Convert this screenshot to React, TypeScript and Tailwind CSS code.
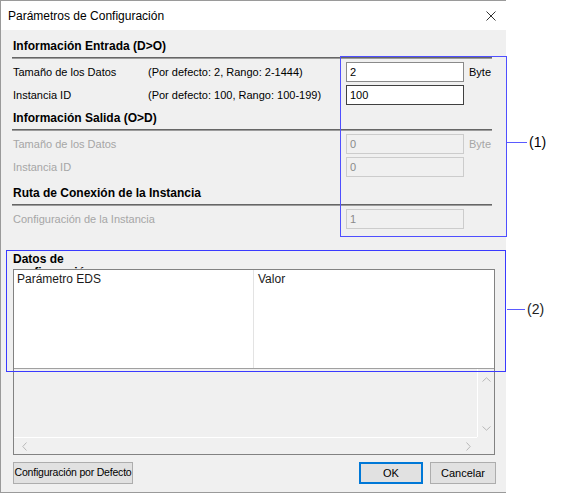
import React from "react";

function SectionHeader({ title, mt }: { title: string; mt: string }) {
  return (
    <>
      <div className={`${mt} h-[16px] whitespace-nowrap pl-[1px] text-[12px] font-bold leading-[16px] text-black`}>{title}</div>
      <div className="mt-[3px] w-[480px]">
        <div className="h-px bg-[#666666]" />
        <div className="h-px bg-[#9c9c9c]" />
      </div>
    </>
  );
}

function Row({
  label,
  hint,
  value,
  unit,
  disabled,
  dark,
}: {
  label: string;
  hint?: string;
  value: string;
  unit?: string;
  disabled?: boolean;
  dark?: boolean;
}) {
  return (
    <div className="mt-[3px] flex h-[20px] items-center whitespace-nowrap">
      <div className={`w-[136px] shrink-0 pl-[1px] ${disabled ? "text-[#a6a6a6]" : "text-black"}`}>{label}</div>
      <div className="w-[198px] shrink-0 text-black">{hint ?? ""}</div>
      <div
        className={`flex h-[20px] w-[118px] shrink-0 items-center border px-[3px] ${
          disabled
            ? "border-[#cccccc] bg-[#f0f0f0] text-[#8a8a8a]"
            : dark
            ? "border-[#404040] bg-white text-black"
            : "border-[#8a8a8a] bg-white text-black"
        }`}
      >
        {value}
      </div>
      {unit ? (
        <div className={`ml-[5px] ${disabled ? "text-[#a6a6a6]" : "text-black"}`}>{unit}</div>
      ) : null}
    </div>
  );
}

function ChevronUp() {
  return (
    <svg width="9" height="5" viewBox="0 0 9 5">
      <path d="M0.5 4.5 L4.5 0.8 L8.5 4.5" fill="none" stroke="#b8b8b8" strokeWidth="1" />
    </svg>
  );
}
function ChevronDown() {
  return (
    <svg width="9" height="5" viewBox="0 0 9 5">
      <path d="M0.5 0.5 L4.5 4.2 L8.5 0.5" fill="none" stroke="#b8b8b8" strokeWidth="1" />
    </svg>
  );
}
function ChevronLeft() {
  return (
    <svg width="5" height="9" viewBox="0 0 5 9">
      <path d="M4.5 0.5 L0.8 4.5 L4.5 8.5" fill="none" stroke="#b8b8b8" strokeWidth="1" />
    </svg>
  );
}
function ChevronRight() {
  return (
    <svg width="5" height="9" viewBox="0 0 5 9">
      <path d="M0.5 0.5 L4.2 4.5 L0.5 8.5" fill="none" stroke="#b8b8b8" strokeWidth="1" />
    </svg>
  );
}

export default function App() {
  return (
    <div className="relative h-[494px] w-[570px] overflow-hidden bg-white font-['Liberation_Sans',Arial,sans-serif] text-[11px]">
      <div className="flex h-[493px] w-[506px] flex-col border-b border-l border-t border-[#9a9a9a]">
        {/* Title bar */}
        <div className="flex h-[29px] items-center justify-between bg-white pl-[7px] pr-[10px]">
          <div className="text-[12px] text-black">Parámetros de Configuración</div>
          <svg width="10" height="10" viewBox="0 0 10 10">
            <path d="M0.5 0.5 L9.5 9.5 M9.5 0.5 L0.5 9.5" stroke="#333" strokeWidth="1" />
          </svg>
        </div>

        {/* Body */}
        <div className="flex flex-1 flex-col bg-[#f0f0f0] pl-[11px] pr-[10px]">
          <SectionHeader title="Información Entrada (D>O)" mt="mt-[8px]" />
          <Row label="Tamaño de los Datos" hint="(Por defecto: 2, Rango: 2-1444)" value="2" unit="Byte" />
          <Row label="Instancia ID" hint="(Por defecto: 100, Rango: 100-199)" value="100" dark />

          <SectionHeader title="Información Salida (O>D)" mt="mt-[5px]" />
          <Row label="Tamaño de los Datos" value="0" unit="Byte" disabled />
          <Row label="Instancia ID" value="0" disabled />

          <SectionHeader title="Ruta de Conexión de la Instancia" mt="mt-[8px]" />
          <Row label="Configuración de la Instancia" value="1" disabled />

          {/* Datos de configuración */}
          <div className="mt-[24px] h-[16px] overflow-hidden pl-[1px] text-[12px] font-bold leading-[13px] text-black">
            <div>Datos de</div>
            <div>configuración</div>
          </div>

          <div className="ml-[1px] flex h-[186px] w-[482px] flex-col border border-[#828282]">
            <div className="flex h-[99px] border-b border-[#a0a0a0] bg-white text-[12px] text-[#1a1a1a]">
              <div className="w-[240px] border-r border-[#e3e3e3] pl-[3px] pt-[2px] leading-[14px]">Parámetro EDS</div>
              <div className="flex-1 pl-[4px] pt-[2px] leading-[14px]">Valor</div>
            </div>
            <div className="flex flex-1">
              <div className="flex-1" />
              <div className="flex w-[17px] flex-col items-center justify-between border-l border-white pb-[6px] pt-[8px]">
                <ChevronUp />
                <ChevronDown />
              </div>
            </div>
            <div className="flex h-[17px]">
              <div className="flex flex-1 items-center justify-between border-t border-white pl-[8px] pr-[6px]">
                <ChevronLeft />
                <ChevronRight />
              </div>
              <div className="w-[17px]" />
            </div>
          </div>

          {/* Buttons */}
          <div className="mt-[7px] flex h-[22px] items-center whitespace-nowrap">
            <div className="ml-[1px] flex h-[22px] w-[120px] items-center justify-center border border-[#adadad] bg-[#e1e1e1] text-[10.5px] tracking-[-0.2px] text-black">
              Configuración por Defecto
            </div>
            <div className="flex-1" />
            <div className="flex h-[22px] w-[64px] items-center justify-center border-2 border-[#0078d7] bg-[#e1e1e1] text-black">
              OK
            </div>
            <div className="ml-[7px] flex h-[22px] w-[66px] items-center justify-center border border-[#adadad] bg-[#e1e1e1] text-black">
              Cancelar
            </div>
          </div>
        </div>
      </div>

      {/* Callout overlays */}
      <div className="absolute left-[340px] top-[56px] h-[181px] w-[167px] border border-[#4f4fff]" />
      <div className="absolute left-[507px] top-[142px] h-px w-[20px] bg-[#5a5aff]" />
      <div className="absolute left-[529px] top-[134px] text-[14px] leading-[16px] text-black">(1)</div>

      <div className="absolute left-[6px] top-[250px] h-[122px] w-[500px] border border-[#3a3aff]" />
      <div className="absolute left-[507px] top-[309px] h-px w-[18px] bg-[#5a5aff]" />
      <div className="absolute left-[527px] top-[301px] text-[14px] leading-[16px] text-[#222]">(2)</div>
    </div>
  );
}
